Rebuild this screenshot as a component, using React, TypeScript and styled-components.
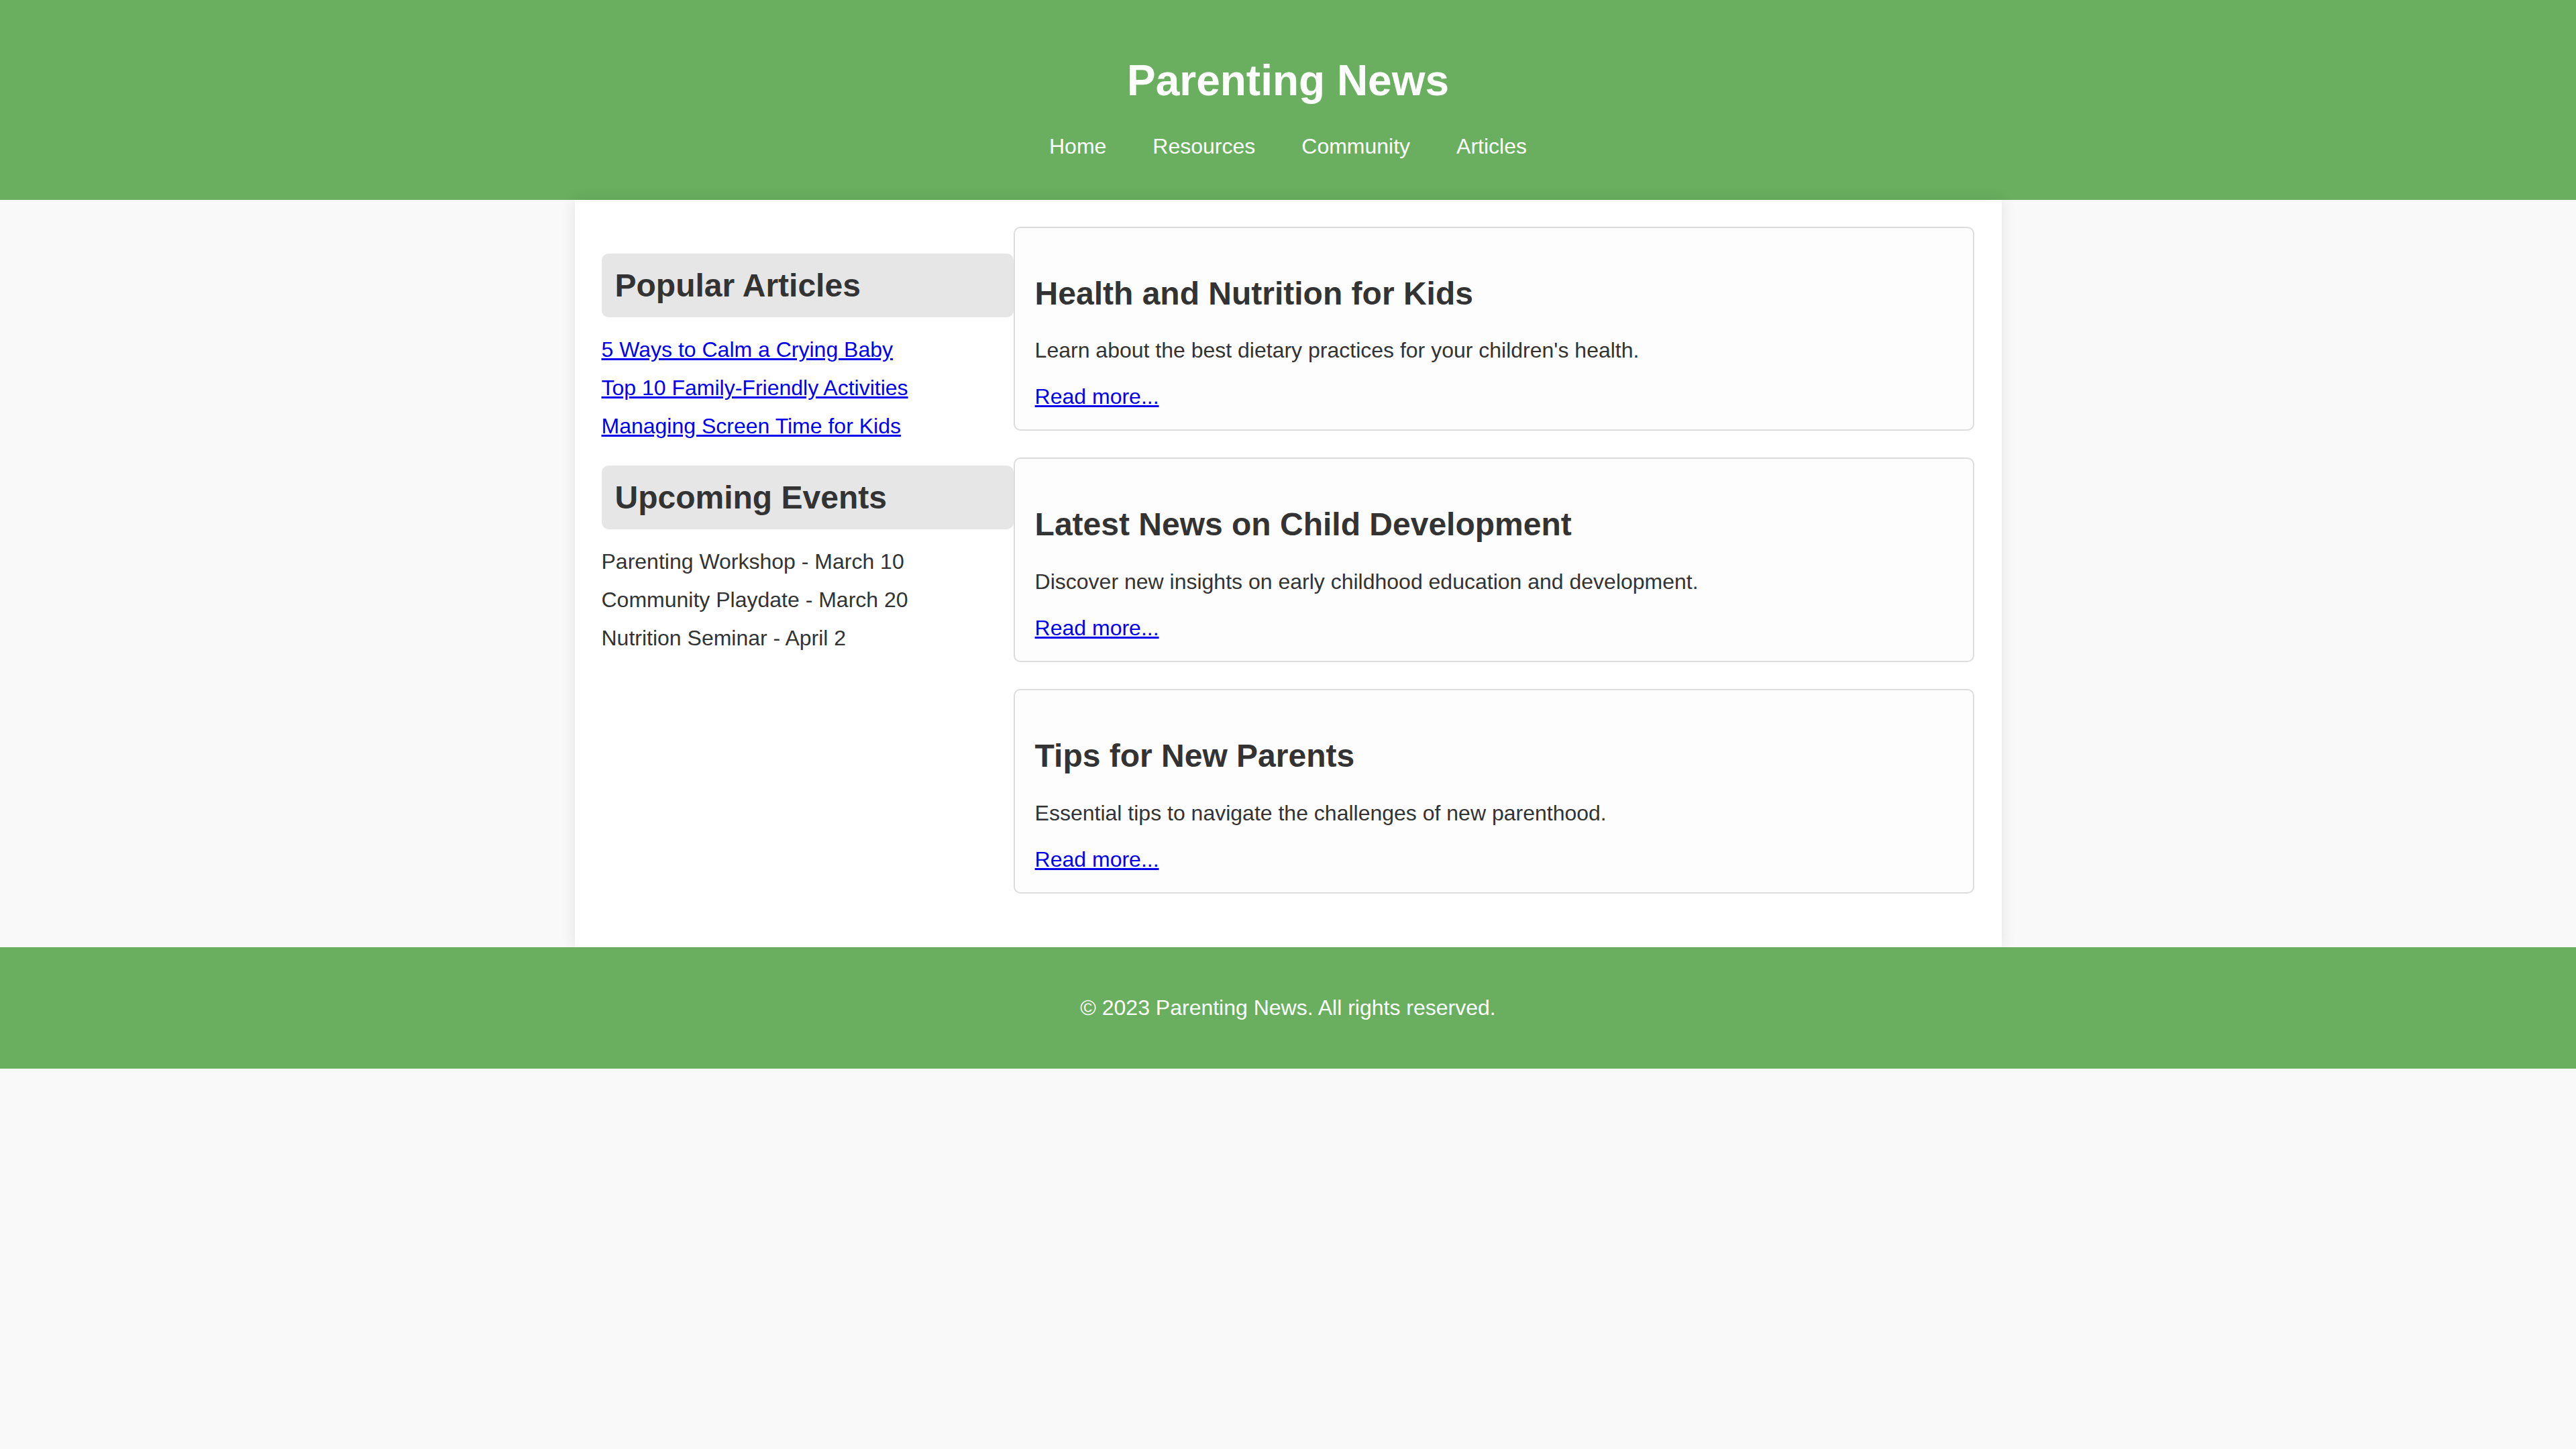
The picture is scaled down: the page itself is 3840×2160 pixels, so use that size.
import React from "react";
import styled, { createGlobalStyle } from "styled-components";

const GlobalStyle = createGlobalStyle`
  html, body {
    margin: 0;
    padding: 0;
    background: #f9f9f9;
  }
  body {
    font-family: "Liberation Sans", Arial, sans-serif;
    color: #333;
  }
`;

const green = "#69af5f";

const Header = styled.header`
  background: ${green};
  color: #fff;
  text-align: center;
  padding: 40px 0 61px;
`;

const Title = styled.h1`
  font-size: 64px;
  font-weight: bold;
  margin: 42.88px 0;
  line-height: normal;
`;

const Nav = styled.nav`
  display: flex;
  justify-content: center;
  gap: 69px;
`;

const NavLink = styled.a`
  color: #fff;
  text-decoration: none;
  font-size: 32px;
  line-height: normal;
`;

const Container = styled.div`
  box-sizing: border-box;
  width: 2127px;
  margin: 0 auto;
  padding: 40px;
  background: #fff;
  box-shadow: 0 0 20px rgba(0, 0, 0, 0.1);
  display: flex;
  align-items: flex-start;
`;

const Sidebar = styled.aside`
  width: 30%;
`;

const SidebarHeading = styled.h2`
  font-size: 48px;
  font-weight: bold;
  color: #333;
  background: #e6e6e6;
  padding: 20px;
  border-radius: 10px;
  margin: 40px 0 30px;
  line-height: normal;
`;

const List = styled.ul`
  list-style: none;
  margin: 0;
  padding: 0;
`;

const Item = styled.li`
  font-size: 32px;
  line-height: normal;
  margin: 0 0 20px;
  color: #333;
`;

const TextLink = styled.a`
  color: #0000ee;
  text-decoration: underline;
  font-size: 32px;
`;

const Main = styled.main`
  width: 70%;
`;

const Card = styled.article`
  background: #fdfdfd;
  border: 2px solid #ddd;
  border-radius: 10px;
  padding: 30px;
  margin-bottom: 40px;
`;

const CardTitle = styled.h2`
  font-size: 48px;
  font-weight: bold;
  color: #333;
  margin: 39.84px 0;
  line-height: normal;
`;

const CardText = styled.p`
  font-size: 32px;
  color: #333;
  margin: 32px 0;
  line-height: normal;
`;

const Footer = styled.footer`
  background: ${green};
  color: #fff;
  text-align: center;
  padding: 40px;
`;

const FooterText = styled.p`
  font-size: 32px;
  margin: 32px 0;
  line-height: normal;
`;

const navItems = ["Home", "Resources", "Community", "Articles"];

const popular = [
  "5 Ways to Calm a Crying Baby",
  "Top 10 Family-Friendly Activities",
  "Managing Screen Time for Kids",
];

const events = [
  "Parenting Workshop - March 10",
  "Community Playdate - March 20",
  "Nutrition Seminar - April 2",
];

const articles = [
  {
    title: "Health and Nutrition for Kids",
    text: "Learn about the best dietary practices for your children's health.",
  },
  {
    title: "Latest News on Child Development",
    text: "Discover new insights on early childhood education and development.",
  },
  {
    title: "Tips for New Parents",
    text: "Essential tips to navigate the challenges of new parenthood.",
  },
];

export default function App() {
  return (
    <>
      <GlobalStyle />
      <Header>
        <Title>Parenting News</Title>
        <Nav>
          {navItems.map((n) => (
            <NavLink key={n} href="#">
              {n}
            </NavLink>
          ))}
        </Nav>
      </Header>
      <Container>
        <Sidebar>
          <SidebarHeading>Popular Articles</SidebarHeading>
          <List>
            {popular.map((p) => (
              <Item key={p}>
                <TextLink href="#">{p}</TextLink>
              </Item>
            ))}
          </List>
          <SidebarHeading>Upcoming Events</SidebarHeading>
          <List>
            {events.map((e) => (
              <Item key={e}>{e}</Item>
            ))}
          </List>
        </Sidebar>
        <Main>
          {articles.map((a) => (
            <Card key={a.title}>
              <CardTitle>{a.title}</CardTitle>
              <CardText>{a.text}</CardText>
              <TextLink href="#">Read more...</TextLink>
            </Card>
          ))}
        </Main>
      </Container>
      <Footer>
        <FooterText>© 2023 Parenting News. All rights reserved.</FooterText>
      </Footer>
    </>
  );
}
